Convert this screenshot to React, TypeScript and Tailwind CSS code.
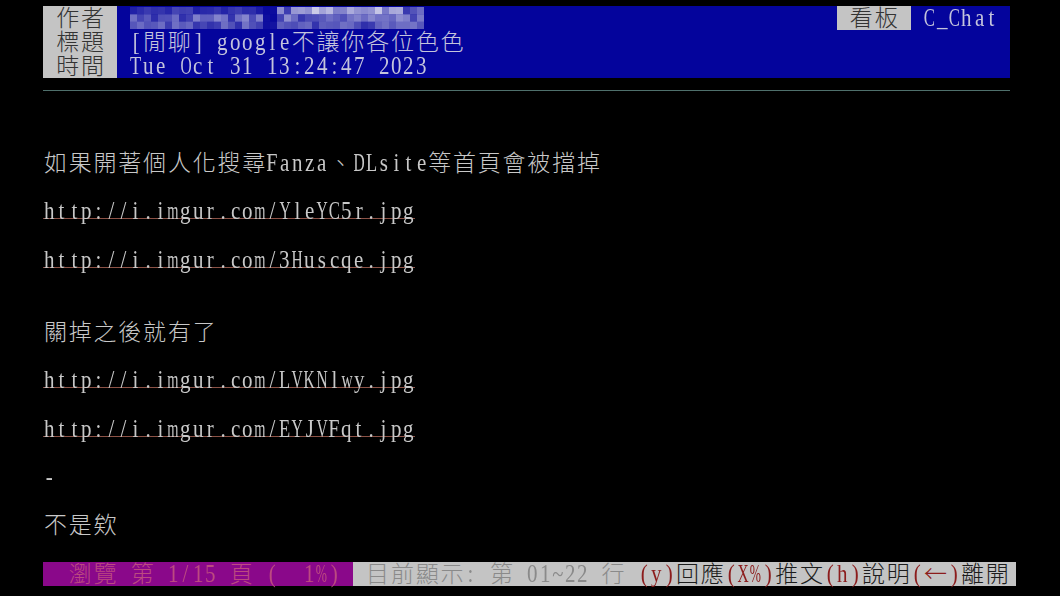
import React from "react";

const TW: Record<string, number> = {
  a: 0.444, b: 0.5, c: 0.444, d: 0.5, e: 0.444, f: 0.333, g: 0.5, h: 0.5, i: 0.278, j: 0.278, k: 0.5, l: 0.278, m: 0.778,
  n: 0.5, o: 0.5, p: 0.5, q: 0.5, r: 0.333, s: 0.389, t: 0.278, u: 0.5, v: 0.5, w: 0.722, x: 0.5, y: 0.5, z: 0.444,
  A: 0.722, B: 0.667, C: 0.667, D: 0.722, E: 0.611, F: 0.556, G: 0.722, H: 0.722, I: 0.333, J: 0.389, K: 0.722, L: 0.611,
  M: 0.889, N: 0.722, O: 0.722, P: 0.556, Q: 0.722, R: 0.667, S: 0.556, T: 0.611, U: 0.722, V: 0.722, W: 0.944, X: 0.722,
  Y: 0.722, Z: 0.611, "%": 0.833, "~": 0.541, _: 0.5, "-": 0.333, ".": 0.25, ":": 0.278, "/": 0.278, "(": 0.333, ")": 0.333,
  "[": 0.333, "]": 0.333,
};

const isWide = (c: string) => c.charCodeAt(0) >= 0x2e80 || c === "←";

function Cells({ s }: { s: string }) {
  return (
    <>
      {Array.from(s).map((c, i) => {
        if (isWide(c)) {
          return (
            <span
              key={i}
              className="flex w-[24.8px] shrink-0 justify-center font-['Noto_Sans_CJK_TC','Noto_Sans_CJK_SC',sans-serif] text-[23px] font-light leading-[20px]"
            >
              {c}
            </span>
          );
        }
        const w = (TW[c] ?? 0.5) * 25;
        const scale = Math.min(0.84, 11.2 / w);
        return (
          <span
            key={i}
            className="flex w-[12.4px] shrink-0 justify-center font-['Liberation_Serif',serif] text-[25px] leading-[24px]"
          >
            <span className="block shrink-0" style={{ transform: `scaleX(${scale})` }}>
              {c === " " ? "\u00a0" : c}
            </span>
          </span>
        );
      })}
    </>
  );
}

function Seg({ s, cls }: { s: string; cls: string }) {
  return (
    <div className={"flex h-full items-start " + cls}>
      <Cells s={s} />
    </div>
  );
}

function Row({ children }: { children?: React.ReactNode }) {
  return <div className="flex h-[24.17px] items-start">{children}</div>;
}

function Mosaic() {
  const rnd = (i: number) => {
    const x = Math.sin(i * 12.9898 + 78.233) * 43758.5453;
    return x - Math.floor(x);
  };
  const rects: React.ReactNode[] = [];
  const cw = 7;
  const ch = 7.33;
  for (let col = 0; col < 42; col++) {
    for (let row = 0; row < 3; row++) {
      const x = col * cw;
      const ax = 130 + x;
      let v = 0;
      const r = rnd(col * 3 + row);
      if (ax < 258) {
        v = 0.2 + 0.45 * r;
        if (row === 0) v *= 0.5;
        if (row === 2) v *= 0.9;
      } else if (ax < 276) {
        v = 0.08 * r;
      } else {
        v = 0.25 + 0.45 * r;
        if (row === 0 && ax > 285 && ax < 400) v += 0.3;
        if (row === 2) v *= 0.8;
      }
      v = Math.min(1, v);
      const R = Math.round(4 + (205 - 4) * v);
      const G = Math.round(4 + (205 - 4) * v);
      const B = Math.round(155 + (232 - 155) * v);
      rects.push(<rect key={col + "-" + row} x={x} y={row * ch} width={cw + 0.3} height={ch + 0.3} fill={`rgb(${R},${G},${B})`} />);
    }
  }
  return (
    <svg width="294" height="22" viewBox="0 0 294 22" className="mt-[1px] blur-[0.6px]">
      {rects}
    </svg>
  );
}

const BLUE = "bg-[#04049c] text-[#c4c4dc]";

function Link({ url }: { url: string }) {
  return (
    <div className="flex h-[24.17px] flex-col">
      <div className="flex h-[19px] items-start overflow-visible text-[#c8c8c8]">
        <Cells s={url} />
      </div>
      <div className="h-px w-[372px] bg-[#8c5246]" />
    </div>
  );
}

function Text({ s }: { s: string }) {
  return (
    <Row>
      <div className="flex items-start text-[#c8c8c8]">
        <Cells s={s} />
      </div>
    </Row>
  );
}

export default function App() {
  return (
    <div className="h-[596px] w-[1060px] overflow-hidden bg-black pl-[43px] pt-[6px]">
      <div className="flex w-[967.2px] flex-col">
        <Row>
          <Seg s=" 作者 " cls="bg-[#c4c4c4] text-[#333333]" />
          <div className="flex h-full w-[719.2px] items-start bg-[#04049c] pl-[12.4px]">
            <Mosaic />
          </div>
          <Seg s=" 看板 " cls="bg-[#c4c4c4] text-[#333333]" />
          <Seg s=" C_Chat " cls={BLUE} />
        </Row>
        <Row>
          <Seg s=" 標題 " cls="bg-[#c4c4c4] text-[#333333]" />
          <Seg s=" [閒聊] google不讓你各位色色" cls={"flex-1 " + BLUE} />
        </Row>
        <Row>
          <Seg s=" 時間 " cls="bg-[#c4c4c4] text-[#333333]" />
          <Seg s=" Tue Oct 31 13:24:47 2023" cls={"flex-1 " + BLUE} />
        </Row>
        <div className="flex h-[24.17px] items-center">
          <div className="h-px w-full bg-[#4f706c]" />
        </div>
      </div>
      <Row />
      <Row />
      <Text s="如果開著個人化搜尋Fanza、DLsite等首頁會被擋掉" />
      <Row />
      <Link url="http://i.imgur.com/YleYC5r.jpg" />
      <Row />
      <Link url="http://i.imgur.com/3Huscqe.jpg" />
      <Row />
      <Row />
      <Text s="關掉之後就有了" />
      <Row />
      <Link url="http://i.imgur.com/LVKNlwy.jpg" />
      <Row />
      <Link url="http://i.imgur.com/EYJVFqt.jpg" />
      <Row />
      <Text s="-" />
      <Row />
      <Text s="不是欸" />
      <Row />
      <Row>
        <Seg s="  瀏覽 第 1/15 頁 (  1%) " cls="bg-[#8a088a] text-[#bc4a80]" />
        <Seg s=" 目前顯示: 第 01~22 行 " cls="bg-[#c4c4c4] text-[#8a8a8a]" />
        <Seg s="(y)" cls="bg-[#c4c4c4] text-[#8c1c1c]" />
        <Seg s="回應" cls="bg-[#c4c4c4] text-[#1c1c1c]" />
        <Seg s="(X%)" cls="bg-[#c4c4c4] text-[#8c1c1c]" />
        <Seg s="推文" cls="bg-[#c4c4c4] text-[#1c1c1c]" />
        <Seg s="(h)" cls="bg-[#c4c4c4] text-[#8c1c1c]" />
        <Seg s="說明" cls="bg-[#c4c4c4] text-[#1c1c1c]" />
        <Seg s="(←)" cls="bg-[#c4c4c4] text-[#8c1c1c]" />
        <Seg s="離開" cls="bg-[#c4c4c4] text-[#1c1c1c]" />
        <div className="h-full w-[6px] bg-[#c4c4c4]" />
      </Row>
    </div>
  );
}
